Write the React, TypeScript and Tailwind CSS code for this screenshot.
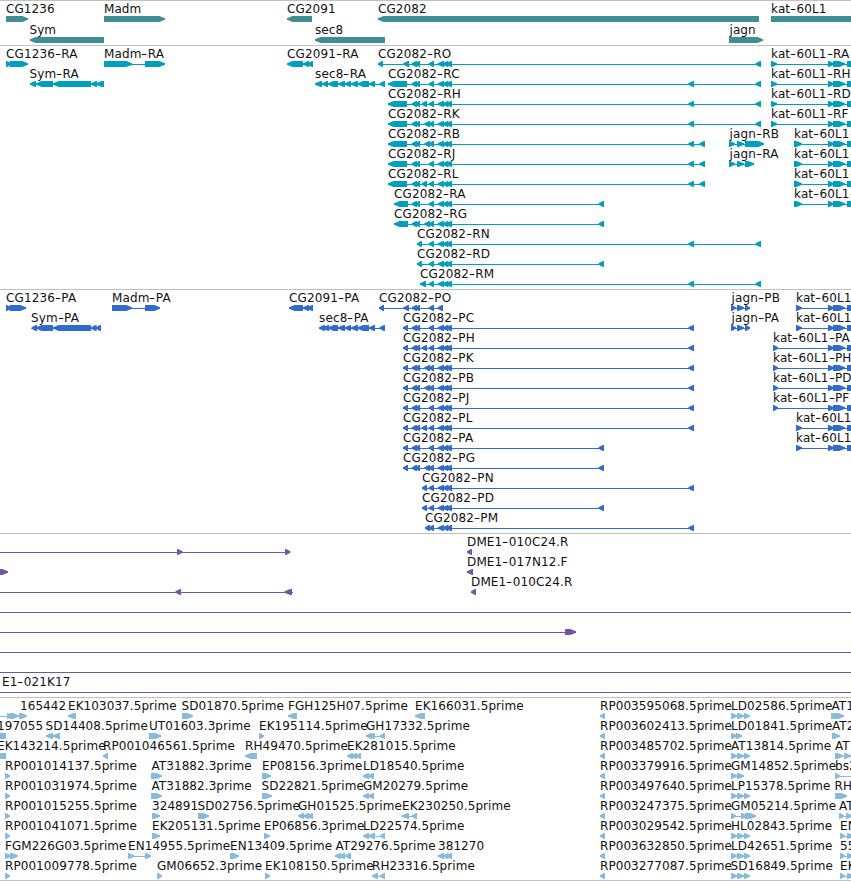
import React from 'react';

type Strand = 'L' | 'R';
type Segment = [number, number];

interface Feature {
  x: number;
  label?: string;
  strand: Strand;
  segments: Segment[];
  // connector line, when it reaches further than the segments
  line?: Segment;
}

interface TrackProps {
  color: string;
  rows: Feature[][];
  rowClass?: string;
  className?: string;
}

const HEAD = 5.6;

const left = (x: number, label: string, ...segments: Segment[]): Feature => ({ x, label, strand: 'L', segments });
const right = (x: number, label: string, ...segments: Segment[]): Feature => ({ x, label, strand: 'R', segments });

// Exons shared between the CG2082 isoforms
const exonB: Segment[] = [[411.7, 417], [415.5, 420]];
const exonC: Segment[] = [[428.7, 434]];
const exonC2: Segment[] = [[421.7, 427], [428.7, 434]];
const exonC3: Segment[] = [[424.3, 430], [428.7, 434]];
const exonD: Segment[] = [[437.7, 444], [442.7, 448.5], [446.5, 452]];
const far: Segment = [688.3, 694];
const farEnd: Segment = [755.5, 761];
const near: Segment = [598.5, 604];

const cg2082 = (suffix: string, start: Segment, middle: Segment[], ...end: Segment[]) =>
  left(start[0], `CG2082-${suffix}`, start, ...middle, ...exonD, ...end);

const katTail: Segment[] = [[828, 834], [833, 845], [847, 860]];
const kat = (suffix: string, start: Segment) => right(start[0], `kat-60L1${suffix}`, start, ...katTail);

const sec8: Segment[] = [[328, 338], [338, 345], [345, 351], [351, 358], [357.5, 369], [369, 375], [379.5, 385]];

const geneRows: Feature[][] = [
  [
    right(6, 'CG1236', [6, 28]),
    right(104, 'Madm', [104, 165]),
    left(287, 'CG2091', [287, 312]),
    left(378, 'CG2082', [378, 759]),
    right(771, 'kat-60L1', [771, 870]),
  ],
  [left(29.5, 'Sym', [30, 104]), left(315, 'sec8', [315, 385]), right(729.5, 'jagn', [729, 763])],
];

const transcriptRows: Feature[][] = [
  [
    right(6, 'CG1236-RA', [6, 11], [9.5, 28]),
    right(104, 'Madm-RA', [104, 132], [145, 165]),
    left(287, 'CG2091-RA', [287, 303], [303, 309], [307, 313]),
    left(378, 'CG2082-RO', [378, 383], [403.3, 409], ...exonB, ...exonC, ...exonD, farEnd),
    kat('-RA', [771, 777]),
  ],
  [
    left(29.5, 'Sym-RA', [30, 36], [36, 53], [53, 91], [91, 97], [96, 104]),
    left(315, 'sec8-RA', [315, 322], [322, 328], ...sec8),
    cg2082('RC', [388, 407], [...exonB, ...exonC], far, farEnd),
    kat('-RH', [771, 777]),
  ],
  [cg2082('RH', [388, 407], [...exonB, ...exonC2], far, farEnd), kat('-RD', [771, 777])],
  [cg2082('RK', [388, 407], [...exonB, ...exonC3], far, farEnd), kat('-RF', [771, 777])],
  [
    cg2082('RB', [388, 407], [...exonB, ...exonC3], far, [699.3, 705]),
    right(729.5, 'jagn-RB', [729, 735], [737, 744], [745, 764]),
    kat('-', [794, 802]),
  ],
  [
    cg2082('RJ', [388, 407], [...exonB, ...exonC], far, [699.3, 705]),
    right(729.5, 'jagn-RA', [729, 735], [737, 744], [745, 754]),
    kat('-', [794, 802]),
  ],
  [cg2082('RL', [388, 407], [...exonB, ...exonC2], far, [699.3, 705]), kat('-', [794, 802])],
  [cg2082('RA', [394, 408], [...exonB, ...exonC], near), kat('-', [794, 802])],
  [cg2082('RG', [394, 408], [...exonB, ...exonC3], near)],
  [cg2082('RN', [417, 422], exonC, far, farEnd)],
  [cg2082('RD', [417, 422], exonC, near)],
  [cg2082('RM', [420, 426], exonC, far, farEnd)],
];

const proteinRows: Feature[][] = [
  [
    right(6, 'CG1236-PA', [6, 11], [9.5, 26]),
    right(112, 'Madm-PA', [112, 132], [145, 160]),
    left(289, 'CG2091-PA', [289, 303], [303, 309], [307, 313]),
    left(379, 'CG2082-PO', [379, 384], [403.3, 409], ...exonB, ...exonC, [437.7, 443]),
    right(731.5, 'jagn-PB', [731, 736], [737, 744], [745, 750]),
    kat('', [796, 802]),
  ],
  [
    left(31, 'Sym-PA', [31.5, 37], [36, 53], [53, 91], [91, 96.5], [95.5, 101]),
    left(319, 'sec8-PA', [319, 325], [323, 329], ...sec8),
    cg2082('PC', [403, 408], [...exonB, ...exonC], far),
    right(731.5, 'jagn-PA', [731, 736], [737, 744], [745, 750]),
    kat('', [796, 802]),
  ],
  [cg2082('PH', [403, 408], [...exonB, ...exonC2], far), kat('-PA', [773, 778])],
  [cg2082('PK', [403, 408], [...exonB, ...exonC3], far), kat('-PH', [773, 778])],
  [cg2082('PB', [403, 408], [...exonB, ...exonC3], far), kat('-PD', [773, 778])],
  [cg2082('PJ', [403, 408], [...exonB, ...exonC], far), kat('-PF', [773, 778])],
  [cg2082('PL', [403, 408], [...exonB, ...exonC2], far), kat('', [796, 802])],
  [cg2082('PA', [403, 408], [...exonB, ...exonC], near), kat('', [796, 802])],
  [cg2082('PG', [403, 408], [...exonB, ...exonC3], near)],
  [cg2082('PN', [422, 427], exonC, far)],
  [cg2082('PD', [422, 427], exonC, near)],
  [cg2082('PM', [425, 430], exonC, far)],
];

const through: Feature = { x: 0, strand: 'R', segments: [], line: [0, 851] };

const bacRows: Feature[][] = [
  [
    { x: 0, strand: 'R', segments: [[177, 182.5], [285, 290.5]], line: [0, 290] },
    left(467, 'DME1-010C24.R', [467, 472]),
  ],
  [{ x: 0, strand: 'R', segments: [[-8, 8]] }, left(467, 'DME1-017N12.F', [467, 473])],
  [
    { x: 0, strand: 'L', segments: [[175.5, 181], [284.5, 292]], line: [0, 293] },
    left(471, 'DME1-010C24.R', [471, 476]),
  ],
  [through],
  [{ x: 0, strand: 'R', segments: [[565, 576]], line: [0, 576] }],
  [through],
  [through],
  [{ ...through, x: 2, label: 'E1-021K17' }],
];

const rp = (id: string) => left(600, `RP00${id}.5prime`, [600, 605]);
const triple: Segment[] = [[731, 737], [737, 744], [744, 750]];

const estRows: Feature[][] = [
  [
    { x: 20, label: '165442', strand: 'R', segments: [[7, 13], [10, 18.5], [19, 27]], line: [0, 20] },
    left(68, 'EK103037.5prime', [68, 76]),
    right(181.5, 'SD01870.5prime', [182, 193]),
    left(288, 'FGH125H07.5prime', [288, 297]),
    left(415, 'EK166031.5prime', [415, 425]),
    rp('3595068'),
    right(731, 'LD02586.5prime', ...triple),
    right(831.5, 'AT1', [831, 844]),
  ],
  [
    left(-3, '197055', [-12, 6]),
    left(45.5, 'SD14408.5prime', [46, 53], [53, 60]),
    right(149, 'UT01603.3prime', [149, 161]),
    right(259, 'EK195114.5prime', [259, 264]),
    left(366, 'GH17332.5prime', [366, 372], [370, 375], [380, 385]),
    rp('3602413'),
    right(731, 'LD01841.5prime', [731, 737], [736, 742]),
    right(832, 'AT2', [832, 840]),
  ],
  [
    left(-3, 'EK143214.5prime', [-12, 6]),
    left(103, 'RP001046561.5prime', [103, 108]),
    left(245, 'RH49470.5prime', [245, 257]),
    left(347, 'EK281015.5prime', [347, 353], [351, 357], [356, 361]),
    rp('3485702'),
    right(731, 'AT13814.5prime', ...triple),
    right(835, 'AT', [835, 843], [844, 851]),
  ],
  [
    right(5, 'RP001014137.5prime', [5, 10]),
    right(151.5, 'AT31882.3prime', [151, 162]),
    right(262, 'EP08156.3prime', [262, 271]),
    left(363, 'LD18540.5prime', [363, 369], [368, 374]),
    rp('3379916'),
    right(731, 'GM14852.5prime', [731, 737], [737, 744]),
    right(835, 'bs2', [835, 840], [856, 862]),
  ],
  [
    right(5, 'RP001031974.5prime', [5, 10]),
    right(151.5, 'AT31882.3prime', [151, 162]),
    right(261.5, 'SD22821.5prime', [262, 272]),
    left(363, 'GM20279.5prime', [363, 369], [368, 374]),
    rp('3497640'),
    right(731, 'LP15378.5prime', ...triple),
    right(834.5, 'RH', [835, 847]),
  ],
  [
    right(5, 'RP001015255.5prime', [5, 10]),
    right(152, '324891', [152, 160]),
    right(197.5, 'SD02756.5prime', [198, 209]),
    left(298, 'GH01525.5prime', [298, 304], [303, 309], [307, 313]),
    left(402, 'EK230250.5prime', [402, 409], [411.7, 417]),
    rp('3247375'),
    right(731, 'GM05214.5prime', [731, 736], [741, 747], [745, 756]),
    right(839, 'AT', [839, 844], [846, 852]),
  ],
  [
    right(5, 'RP001041071.5prime', [5, 10]),
    right(152, 'EK205131.5prime', [152, 160]),
    right(264, 'EP06856.3prime', [264, 270]),
    left(363, 'LD22574.5prime', [363, 369], [368, 375], [380, 385]),
    rp('3029542'),
    right(731, 'HL02843.5prime', ...triple),
    right(840, 'EN', [840, 845], [847, 853]),
  ],
  [
    right(5, 'FGM226G03.5prime', [5, 11], [10, 18]),
    right(128, 'EN14955.5prime', [128, 134], [145, 151]),
    right(230, 'EN13409.5prime', [230, 239]),
    left(335.5, 'AT29276.5prime', [335, 341], [339, 345], [345, 351]),
    left(438, '381270', ...exonD),
    rp('3632850'),
    right(731, 'LD42651.5prime', ...triple),
    right(840, '55', [840, 845], [847, 853]),
  ],
  [
    right(5, 'RP001009778.5prime', [5, 10]),
    right(157, 'GM06652.3prime', [157, 162]),
    right(265, 'EK108150.5prime', [265, 270]),
    left(372, 'RH23316.5prime', [372, 378], [380, 385]),
    rp('3277087'),
    right(730.5, 'SD16849.5prime', ...triple),
    right(840, 'EK', [840, 845], [847, 853]),
  ],
];

const arrowPoints = ([a, b]: Segment, strand: Strand) => {
  // keep a sliver of full height behind the head of short exons
  const head = Math.min(b - a - 1, HEAD);
  return strand === 'L'
    ? `${b},0 ${a + head},0 ${a},2.2 ${a},3.8 ${a + head},6 ${b},6`
    : `${a},0 ${b - head},0 ${b},2.2 ${b},3.8 ${b - head},6 ${a},6`;
};

const Glyphs: React.FC<{ features: Feature[] }> = ({ features }) => (
  <svg className="block w-[851px] h-[6px]" viewBox="0 0 851 6" fill="currentColor">
    {features.map((f, i) => {
      const [from, to] = f.line ?? [
        Math.min(...f.segments.map((s) => s[0])),
        Math.max(...f.segments.map((s) => s[1])),
      ];
      return (
        <g key={i}>
          <rect x={from} y={3} width={to - from} height={1} />
          {f.segments.map((s, j) => (
            <polygon key={j} points={arrowPoints(s, f.strand)} />
          ))}
        </g>
      );
    })}
  </svg>
);

// Name of a feature, with a wide hyphen before the isoform
const Label: React.FC<{ x: number; text: string }> = ({ x, text }) => {
  const [name, ...rest] = text.split('-');
  const tracking = rest.length > 0 ? 'tracking-[0.14px]' : 'tracking-[0.07px]';
  return (
    <span
      className={`absolute top-[1px] text-[12px] leading-[14px] whitespace-nowrap text-[#111] ${tracking}`}
      style={{ left: x }}
    >
      {name}
      {rest.map((part, i) => (
        <React.Fragment key={i}>
          <span className="inline-block mx-[0.9px] scale-x-140">-</span>
          {part}
        </React.Fragment>
      ))}
    </span>
  );
};

const Track: React.FC<TrackProps> = ({ color, rows, rowClass = 'h-[20px]', className = 'pb-[3px]' }) => (
  <section className={`border-t border-[#c0c0c0] ${color} ${className}`}>
    {rows.map((features, i) => (
      <div key={i} className={`relative ${rowClass} pt-[15px]`}>
        <Glyphs features={features} />
        {features.map((f, j) => (f.label ? <Label key={j} x={f.x} text={f.label} /> : null))}
      </div>
    ))}
  </section>
);

const App: React.FC = () => {
  return (
    <main className="w-[851px] h-[881px] overflow-hidden bg-white font-['DejaVu_Sans',sans-serif]">
      {/* Genes */}
      <Track color="text-[#408e93]" rows={geneRows} rowClass="h-[21px]" className="pb-[2px]" />
      {/* Transcripts */}
      <Track color="text-[#009fbf]" rows={transcriptRows} />
      {/* Proteins */}
      <Track color="text-[#316bcd]" rows={proteinRows} />
      {/* BAC ends */}
      <Track color="text-[#7454a7]" rows={bacRows} />
      {/* ESTs */}
      <Track color="text-[#87bbde]" rows={estRows} className="pb-[2px] border-b" />
    </main>
  );
};

export default App;
